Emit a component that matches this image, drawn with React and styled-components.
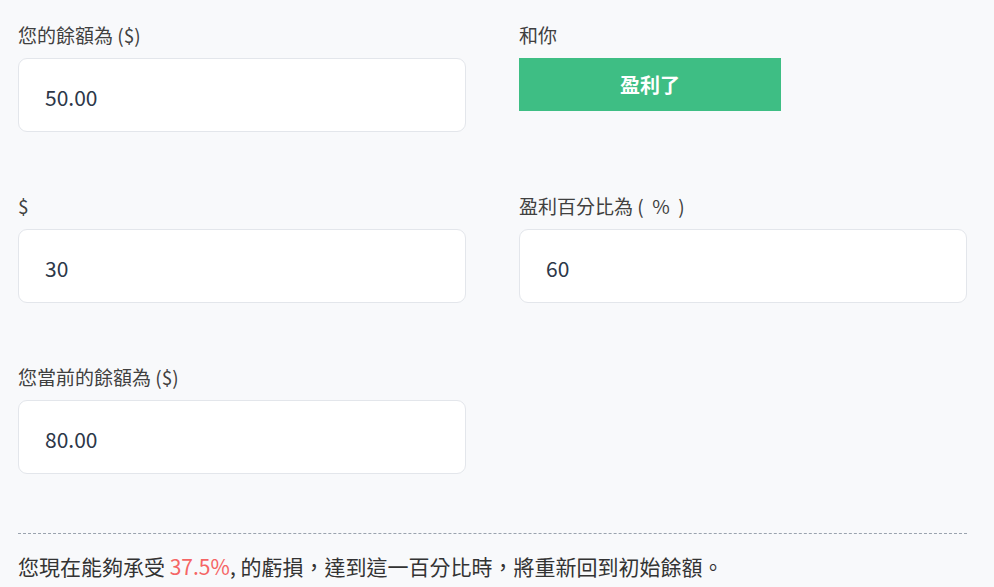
import React from "react";
import styled, { createGlobalStyle } from "styled-components";

const Global = createGlobalStyle`
  html, body { margin: 0; padding: 0; background: #f8f9fb; }
  body { font-family: "Noto Sans CJK TC", "Noto Sans", sans-serif; }
  * { box-sizing: border-box; }
`;

const Page = styled.div`
  padding: 23px 27px 0 18px;
  min-height: 587px;
`;

const Grid = styled.div`
  display: grid;
  grid-template-columns: 448px 448px;
  column-gap: 53px;
  row-gap: 62px;
`;

const Field = styled.div`
  display: flex;
  flex-direction: column;
  align-items: flex-start;
`;

const Label = styled.label`
  font-size: 19px;
  line-height: 24px;
  color: #404040;
  margin-bottom: 11px;
  white-space: pre;
`;

const Input = styled.input`
  width: 100%;
  height: 74px;
  border: 1px solid #e3e6eb;
  border-radius: 9px;
  background: #fff;
  padding: 4px 26px 0;
  font-family: inherit;
  font-size: 21px;
  color: #2d3748;
  outline: none;
`;

const Button = styled.button`
  width: 262px;
  height: 53px;
  border: none;
  background: #3ebe84;
  color: #fff;
  font-family: inherit;
  font-size: 20px;
  font-weight: 700;
  cursor: pointer;
`;

const Divider = styled.hr`
  border: none;
  border-top: 1px dashed #9aa3ae;
  margin: 59px 0 0;
  width: 949px;
`;

const Result = styled.p`
  margin: 18px 0 0;
  font-size: 21px;
  line-height: 28px;
  color: #333;
`;

const Red = styled.span`
  color: #f56565;
`;

export default function App() {
  return (
    <>
      <Global />
      <Page>
        <Grid>
          <Field>
            <Label>您的餘額為 ($)</Label>
            <Input defaultValue="50.00" />
          </Field>
          <Field>
            <Label>和你</Label>
            <Button>盈利了</Button>
          </Field>
          <Field>
            <Label>$</Label>
            <Input defaultValue="30" />
          </Field>
          <Field>
            <Label>{"盈利百分比為 (  %  )"}</Label>
            <Input defaultValue="60" />
          </Field>
          <Field>
            <Label>您當前的餘額為 ($)</Label>
            <Input defaultValue="80.00" />
          </Field>
        </Grid>
        <Divider />
        <Result>
          您現在能夠承受 <Red>37.5%</Red>, 的虧損，達到這一百分比時，將重新回到初始餘額。
        </Result>
      </Page>
    </>
  );
}
